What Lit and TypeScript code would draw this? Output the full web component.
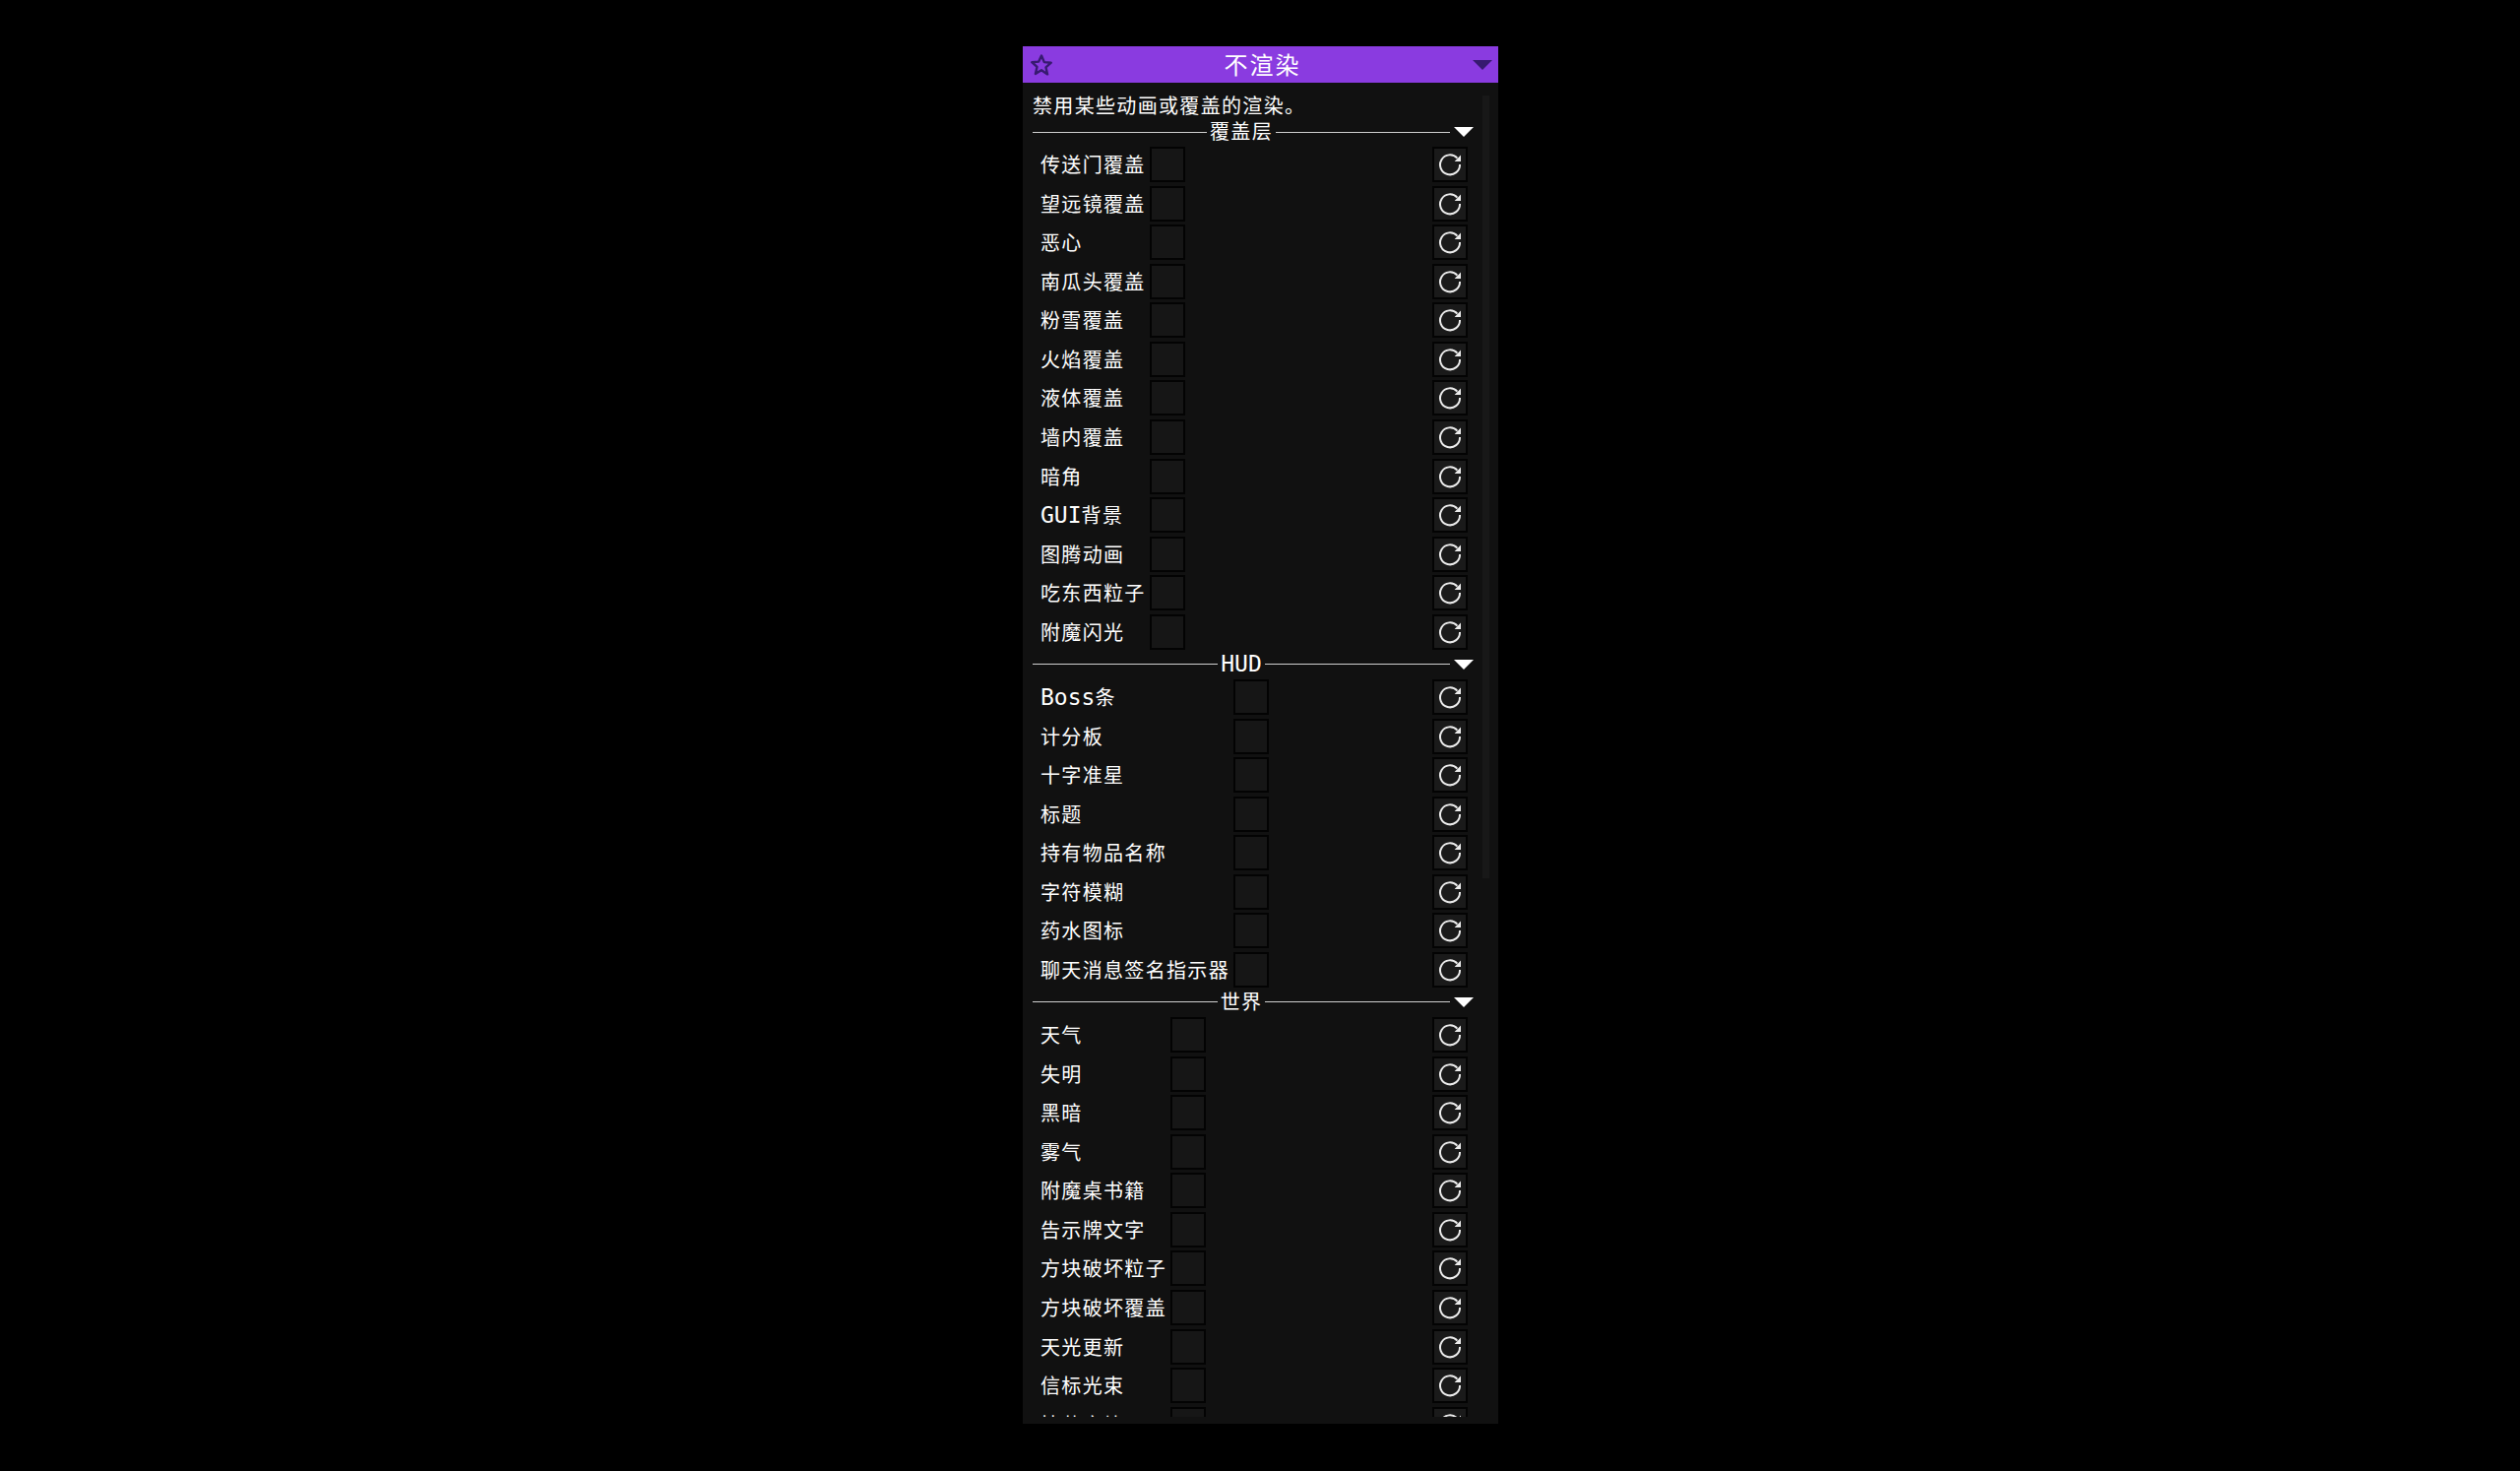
import { LitElement, html, css, svg } from 'lit';
import { customElement } from 'lit/decorators.js';

// a label is plain text, latin runs go in their own span
const latin = (s: string) => html`<span class="latin">${s}</span>`;

const SECTIONS = [
  {
    title: '覆盖层',
    rows: ['传送门覆盖', '望远镜覆盖', '恶心', '南瓜头覆盖', '粉雪覆盖', '火焰覆盖', '液体覆盖', '墙内覆盖', '暗角',
      html`${latin('GUI')}背景`, '图腾动画', '吃东西粒子', '附魔闪光'],
  },
  {
    title: latin('HUD'),
    rows: [html`${latin('Boss')}条`, '计分板', '十字准星', '标题', '持有物品名称', '字符模糊', '药水图标', '聊天消息签名指示器'],
  },
  {
    title: '世界',
    rows: ['天气', '失明', '黑暗', '雾气', '附魔桌书籍', '告示牌文字', '方块破坏粒子', '方块破坏覆盖', '天光更新', '信标光束', '掉落方块'],
  },
];

const resetIcon = svg`<svg class="reset-icon" viewBox="0 0 24 24" width="24" height="24">
  <path d="M19.4 5.6A10 10 0 1 0 22 12" fill="none" stroke="#ececec" stroke-width="2"/>
  <path d="M23 2.6V9H16.6Z" fill="#ececec"/>
</svg>`;

@customElement('app-root')
export class AppRoot extends LitElement {
  static styles = css`
    :host {
      display: flex;
      justify-content: center;
      align-items: flex-start;
      min-height: 1494px;
      background: #000;
      font-family: "Noto Sans CJK SC", "Noto Sans", sans-serif;
      color: #fff;
    }

    .panel {
      width: 483px;
      height: 1399px;
      margin: 47px 0 0 1px;
      background: #111;
      display: flex;
      flex-direction: column;
    }

    .header {
      height: 37px;
      flex: none;
      background: #8a3be0;
      display: grid;
      grid-template-columns: 1fr auto 1fr;
      align-items: center;
      padding: 0 6px 0 7px;
    }

    .star {
      display: block;
    }

    .title {
      font-size: 24px;
      line-height: 35px;
      height: 37px;
      letter-spacing: 2px;
      padding-left: 3px;
    }

    .arrow {
      width: 0;
      height: 0;
      border-left: 10px solid transparent;
      border-right: 10px solid transparent;
      justify-self: end;
    }

    .header .arrow {
      border-top: 10px solid #371a70;
      margin-top: 1px;
    }

    .content {
      flex: none;
      height: 1355px;
      overflow: hidden;
      position: relative;
      padding: 13px 25px 0 10px;
      box-sizing: border-box;
    }

    .scrollbar {
      position: absolute;
      left: 467px;
      top: 13px;
      width: 7px;
      height: 795px;
      background: #181818;
    }

    .desc {
      font-size: 20px;
      line-height: 20px;
      letter-spacing: 1.33px;
      height: 26px;
    }

    .section-head {
      display: grid;
      grid-template-columns: 424px 24px;
      align-items: center;
      height: 22px;
      margin-bottom: 4px;
    }

    .divider {
      display: flex;
      align-items: center;
      gap: 3px;
      font-size: 20px;
      letter-spacing: 1.33px;
      line-height: 20px;
      height: 22px;
    }

    .divider::before,
    .divider::after {
      content: '';
      flex: 1;
      height: 1px;
      background: #cfcfcf;
    }

    .divider span {
      margin-top: -2px;
    }

    .section-head .arrow {
      border-top: 10px solid #fff;
    }

    .rows {
      display: grid;
      grid-template-columns: auto 36px 1fr 36px;
      grid-auto-rows: 36px;
      row-gap: 3.58px;
      padding: 0 6px 0 8px;
      margin-bottom: 4px;
      align-items: center;
    }

    .label {
      font-size: 20px;
      line-height: 36px;
      height: 36px;
      letter-spacing: 1.33px;
      padding-right: 4.5px;
      white-space: nowrap;
    }

    .latin {
      font-family: "DejaVu Sans Mono", monospace;
      font-size: 23px;
      letter-spacing: 0;
      line-height: 0;
    }

    .check,
    .reset {
      width: 36px;
      height: 36px;
      box-sizing: border-box;
      border: 2px solid #030303;
    }

    .check {
      grid-column: 2;
      background: #161616;
    }

    .reset {
      grid-column: 4;
      display: flex;
      align-items: center;
      justify-content: center;
      background: #1a1a1a;
    }
  `;

  render () {
    return html`
      <div class="panel">
        <div class="header">
          <svg class="star" viewBox="0 0 24 24" width="24" height="24">
            <path d="M12 2.5l2.8 6.6 7 .6-5.3 4.7 1.6 7L12 17.2l-6.1 3.7 1.6-7-5.3-4.7 7-.6z"
              fill="none" stroke="#371a70" stroke-width="2.4" stroke-linejoin="round"/>
          </svg>
          <div class="title">不渲染</div>
          <div class="arrow"></div>
        </div>
        <div class="content">
          <div class="scrollbar"></div>
          <div class="desc">禁用某些动画或覆盖的渲染。</div>
          ${SECTIONS.map(s => html`
            <div class="section-head">
              <div class="divider"><span>${s.title}</span></div>
              <div class="arrow"></div>
            </div>
            <div class="rows">
              ${s.rows.map(r => html`
                <div class="label">${r}</div>
                <div class="check"></div>
                <div class="reset">${resetIcon}</div>
              `)}
            </div>
          `)}
        </div>
      </div>
    `;
  }
}
